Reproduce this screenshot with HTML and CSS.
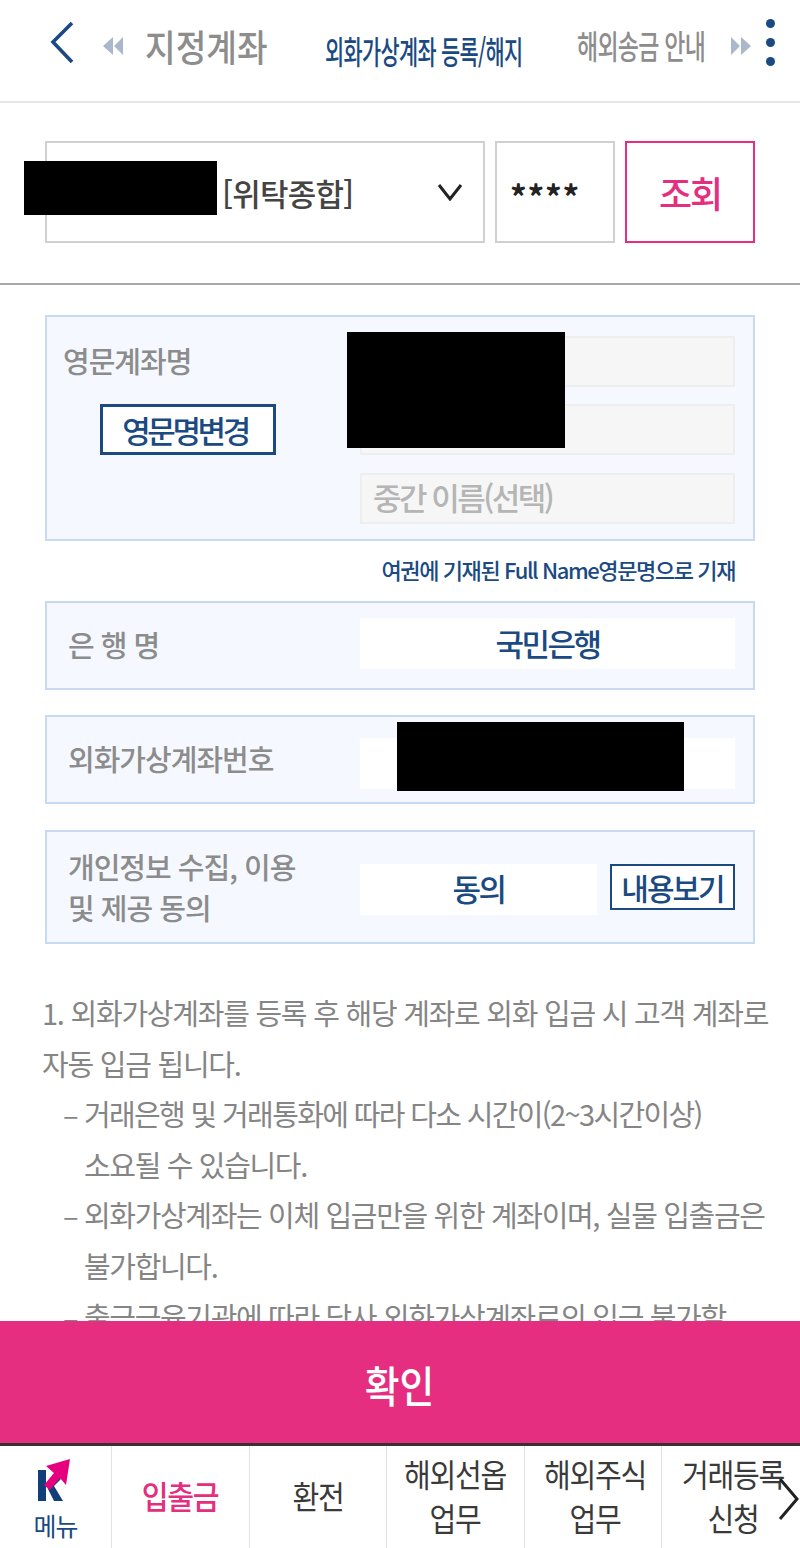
FILE: index.html
```html
<!DOCTYPE html>
<html lang="ko">
<head>
<meta charset="utf-8">
<title>외화가상계좌 등록/해지</title>
<link rel="stylesheet" href="styles.css">
</head>
<body>
<div class="app">
  <header class="topbar">
    <svg class="back" viewBox="0 0 26 44" width="26" height="44"><path d="M23 2 L4 21 L23 41" fill="none" stroke="#1b4a82" stroke-width="3.6"/></svg>
    <svg class="dbl dbl-left" viewBox="0 0 22 20" width="22" height="20"><path d="M11 1 L1 10 L11 19Z M21 1 L12 10 L21 19Z" fill="#a9b8cc"/></svg>
    <span class="tab tab-side tab-first">지정계좌</span>
    <span class="tab tab-active">외화가상계좌 등록/해지</span>
    <span class="tab tab-side tab-last">해외송금 안내</span>
    <svg class="dbl dbl-right" viewBox="0 0 22 20" width="22" height="20"><path d="M1 1 L10 10 L1 19Z M11 1 L21 10 L11 19Z" fill="#a9b8cc"/></svg>
    <div class="kebab"><i></i><i></i><i></i></div>
  </header>

  <section class="query">
    <div class="select">
      <span class="redact redact-account"></span>
      <span class="select-text">[위탁종합]</span>
      <svg class="chev" viewBox="0 0 26 18" width="26" height="18"><path d="M2 2 L13 16 L24 2" fill="none" stroke="#222" stroke-width="3"/></svg>
    </div>
    <div class="pw">****</div>
    <button class="query-btn">조회</button>
  </section>

  <main class="content">
    <div class="panel panel-name">
      <div class="name-left">
        <div class="label">영문계좌명</div>
        <button class="outline-btn name-btn">영문명변경</button>
      </div>
      <div class="name-right">
        <div class="field"></div>
        <div class="field"></div>
        <div class="field field-ph">중간 이름(선택)</div>
      </div>
      <span class="redact redact-name"></span>
    </div>
    <p class="hint">여권에 기재된 Full Name영문명으로 기재</p>

    <div class="panel panel-row panel-bank">
      <div class="label">은 행 명</div>
      <div class="value">국민은행</div>
    </div>
    <div class="panel panel-row panel-gap">
      <div class="label">외화가상계좌번호</div>
      <div class="value"></div>
      <span class="redact redact-number"></span>
    </div>
    <div class="panel panel-row panel-agree">
      <div class="label label-two">개인정보 수집, 이용<br>및 제공 동의</div>
      <div class="agree-right">
        <div class="value value-agree">동의</div>
        <button class="outline-btn view-btn">내용보기</button>
      </div>
    </div>

    <div class="notes">
      <p class="first">1. 외화가상계좌를 등록 후 해당 계좌로 외화 입금 시 고객 계좌로 자동 입금 됩니다.</p>
      <p class="sub"><span class="tight">거래은행 및 거래통화에 따라 다소 시간이(2~3시간이상)</span><br>소요될 수 있습니다.</p>
      <p class="sub">외화가상계좌는 이체 입금만을 위한 계좌이며, 실물 입출금은<br>불가합니다.</p>
      <p class="sub">출금금융기관에 따라 당사 외화가상계좌로의 입금 불가할</p>
    </div>
  </main>

  <button class="confirm"><span class="confirm-text">확인</span></button>

  <nav class="bottom">
    <div class="b-item b-menu">
      <svg viewBox="0 0 40 48" width="40" height="48" class="logo">
        <path d="M2 13 H10 V44 H2Z" fill="#123f7a"/>
        <path d="M10 28 L20 17 L25 22 L18 29 L27 44 H18Z" fill="#123f7a"/>
        <path d="M10 9 L34 2 L30 28 L24 21 L14 33 L8 28 L18 16Z" fill="#e6007e"/>
      </svg>
      <span class="b-menu-text">메뉴</span>
    </div>
    <div class="b-item b-on"><span class="cond">입출금</span></div>
    <div class="b-item"><span class="cond">환전</span></div>
    <div class="b-item"><span class="cond">해외선옵<br>업무</span></div>
    <div class="b-item b-shift"><span class="cond">해외주식<br>업무</span></div>
    <div class="b-item b-shift b-last"><span class="cond">거래등록<br>신청</span></div>
    <svg class="b-next" viewBox="0 0 22 44" width="22" height="44"><path d="M2 2 L19 22 L2 42" fill="none" stroke="#222" stroke-width="3"/></svg>
  </nav>
</div>
</body>
</html>
```
FILE: styles.css
```css
* { box-sizing: border-box; }
html, body { margin: 0; padding: 0; height: 100%; }
body {
  font-family: "Noto Sans CJK KR", "Noto Sans", "Liberation Sans", sans-serif;
  background: #fff;
  color: #333;
}
button { font-family: inherit; background: #fff; padding: 0; cursor: pointer; }
p { margin: 0; }

.app { width: 800px; height: 1548px; display: flex; flex-direction: column; overflow: hidden; position: relative; }

.topbar {
  height: 103px; flex: none; border-bottom: 2px solid #e6e6e6;
  display: flex; align-items: center; padding: 0 0 6px 49px; position: relative;
}
.back { flex: none; margin: -10px 27px 0 0; }
.dbl { flex: none; margin-top: -4px; }
.tab { white-space: nowrap; display: block; flex: none; transform-origin: left center; }
.tab-side { color: #8d8d8d; font-weight: 500; }
.tab-first { font-size: 37px; margin: -4px 0 0 21px; width: 126px; transform: scaleX(.9); }
.tab-active { color: #1b4a82; font-weight: 500; font-size: 32px; letter-spacing: -1px; margin-left: 54px; width: 200px; padding-top: 4px; transform: scaleX(.65); }
.tab-last { font-size: 33px; letter-spacing: -1px; margin: -6px 0 0 52px; width: 130px; transform: scaleX(.695); }
.dbl-right { margin-left: 23px; }
.kebab { display: flex; flex-direction: column; gap: 10px; position: absolute; left: 766px; top: 19px; }
.kebab i { width: 9px; height: 9px; background: #1b4a82; border-radius: 50%; display: block; }

.query {
  height: 182px; flex: none; border-bottom: 2px solid #a8a8a8;
  display: flex; gap: 10px; padding: 38px 45px 0;
}
.select, .pw, .query-btn { height: 102px; }
.select {
  width: 440px; border: 2px solid #d0d0d0; position: relative;
  display: flex; align-items: center; justify-content: space-between; padding: 0 20px 0 175px;
}
.select-text { font-size: 31px; color: #444; letter-spacing: -0.8px; font-weight: 500; }
.pw { width: 120px; border: 2px solid #d0d0d0; display: flex; align-items: center; padding: 8px 0 0 13px; font-size: 33px; font-weight: 700; color: #222; letter-spacing: 0.8px; }
.query-btn { width: 130px; border: 2px solid #e52e80; color: #e52e80; font-size: 36px; font-weight: 500; letter-spacing: -2px; }

.redact { position: absolute; background: #000; display: block; }
.redact-account { left: -23px; top: 18px; width: 193px; height: 54px; }
.redact-name { left: 300px; top: 15px; width: 218px; height: 116px; }
.redact-number { left: 350px; top: 5px; width: 287px; height: 69px; }

.content { flex: 1; min-height: 0; overflow: hidden; padding: 30px 45px 0; }
.panel { width: 710px; background: #f5f9ff; border: 2px solid #c6daf2; position: relative; }
.panel-name { height: 226px; display: flex; padding: 19px 18px 15px 16px; }
.name-left { width: 297px; flex: none; }
.name-left .label { margin-top: 1px; }
.label { font-size: 29px; color: #8c8c8c; font-weight: 500; letter-spacing: -1px; line-height: 46px; }
.outline-btn { border: 3px solid #1b4a82; color: #1b4a82; font-weight: 500; background: #fff; }
.name-btn { width: 176px; height: 51px; padding-right: 6px; font-size: 31px; letter-spacing: -3.4px; line-height: 1; margin: 21px 0 0 37px; display: block; }
.name-right { flex: 1; display: flex; flex-direction: column; gap: 17px; }
.field { height: 51px; background: #f6f6f6; border: 2px solid #eeeeee; flex: none; }
.field-ph { font-size: 31px; color: #b5b5b5; font-weight: 500; letter-spacing: -2.5px; padding-left: 11px; line-height: 44px; margin-top: 1px; }

.hint { text-align: right; padding-right: 20px; color: #1b4a82; font-size: 22px; font-weight: 500; letter-spacing: -1.4px; line-height: 30px; margin: 13px 0 17px; }

.panel-row { height: 89px; display: flex; align-items: center; padding: 0 18px 0 21px; }
.panel-row .label { width: 292px; flex: none; }
.panel-bank { padding-bottom: 4px; }
.panel-gap { margin-top: 25px; padding-top: 8px; }
.panel-gap .label { margin-top: -12px; }
.value { flex: 1; height: 51px; background: #fff; color: #1b4a82; font-size: 31px; font-weight: 500; letter-spacing: -2.5px; display: flex; align-items: center; justify-content: center; padding-bottom: 3px; }
.panel-agree { height: 114px; margin-top: 26px; padding-top: 4px; }
.label-two { line-height: 41px; margin-top: -4px; }
.agree-right { flex: 1; display: flex; align-items: center; gap: 13px; }
.value-agree { flex: none; width: 237px; }
.view-btn { width: 125px; height: 46px; border-width: 2px; font-size: 30px; letter-spacing: -2px; line-height: 1; margin-top: -4px; }

.notes { width: 740px; margin: 43px 0 0 -3px; color: #858585; font-size: 29px; line-height: 50.6px; letter-spacing: -1.35px; font-weight: 400; }
.first { letter-spacing: -1.25px; }
.tight { letter-spacing: -1.65px; }
.sub { padding-left: 42px; position: relative; }
.sub::before { content: "–"; position: absolute; left: 21px; top: 0; }

.confirm {
  flex: none; height: 122px; width: 100%; border: 0; padding-top: 4px; background: #e52e80; color: #fff;
  font-size: 43px; font-weight: 500;
}
.confirm-text { display: inline-block; transform: scaleX(.88); }

.bottom { flex: none; height: 105px; display: flex; border-top: 3px solid #333; position: relative; background: #fff; }
.b-item {
  width: 137.5px; flex: none; border-right: 1px solid #e2e2e2; display: flex; align-items: center; justify-content: center;
  text-align: center; font-size: 32px; line-height: 44px; color: #3a3a3a; letter-spacing: -1.4px; padding-bottom: 4px;
}
.cond { display: block; transform: scaleX(.91); white-space: nowrap; }
.b-shift { padding-left: 5px; }
.b-menu { width: 112px; flex-direction: column; padding-top: 11px; padding-bottom: 0; justify-content: flex-start; }
.logo { display: block; margin-left: 1px; }
.b-menu-text { font-size: 25px; line-height: 34px; color: #1b4a82; letter-spacing: -1px; margin-top: 3px; }
.b-on { color: #e52e80; font-weight: 500; }
.b-last { border-right: 0; }
.b-next { position: absolute; left: 778px; top: 31px; }
```
